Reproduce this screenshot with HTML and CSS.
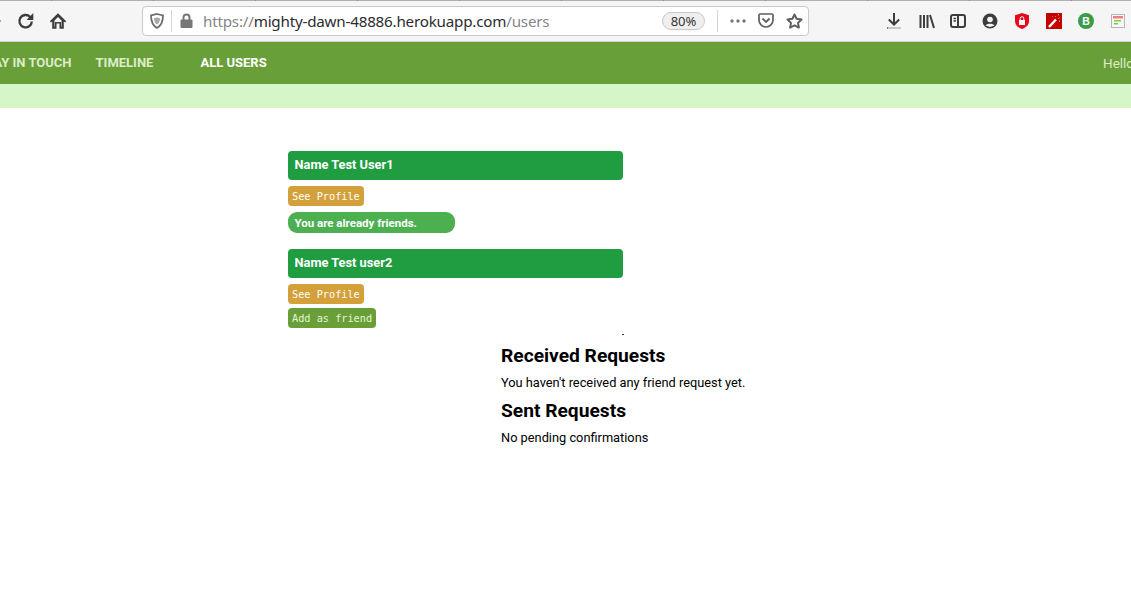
FILE: index.html
```html
<!DOCTYPE html>
<html lang="en">
<head>
<meta charset="utf-8">
<title>Users</title>
<link rel="stylesheet" href="styles.css">
</head>
<body>
<div class="toolbar">
  <div class="tabline"></div>
  <div class="toolrow">
    <span class="backtip"></span>
    <svg class="ico reload" width="18" height="18" viewBox="0 0 18 18"><path d="M14.800 9.500a6.200 6.200 0 1 1-1.800-4.700L15 6.400" fill="none" stroke="#3d3d3f" stroke-width="2.400"/><path d="M16.300 1V8H9.500Z" fill="#3d3d3f"/></svg>
    <svg class="ico home" width="18" height="18" viewBox="0 0 18 18"><path d="M0.800 9.200 9 1.200 17.200 9.200 16 10.500 14.800 9.400V16.800H10.500V11.500H7.500V16.800H3.200V9.400L2 10.500Z" fill="#3d3d3f"/><path d="M5.500 8.500 9 5 12.500 8.500V14.500H12V10H6V14.500H5.500Z" fill="#f5f5f5"/></svg>
    <div class="urlbar">
      <svg class="shield" width="14" height="16" viewBox="0 0 14 16"><path d="M7 1 13 2.500C13 9 11.500 12.500 7 15 2.500 12.500 1 9 1 2.500Z" fill="none" stroke="#6d6d6f" stroke-width="1.800"/><path d="M7 4.500 10 5.200C9.800 8.500 9 10.300 7 11.600 5 10.300 4.200 8.500 4 5.200Z" fill="#a9a9ab"/></svg>
      <span class="urlsep"></span>
      <svg class="lock" width="13" height="15" viewBox="0 0 13 15"><path d="M3.500 7V4.500a3 3 0 0 1 6 0V7" fill="none" stroke="#77777a" stroke-width="2"/><rect x="0.500" y="6.500" width="12" height="8.500" rx="1" fill="#77777a"/></svg>
      <div class="url"><span class="dim">https://</span>mighty-dawn-48886.herokuapp.com<span class="dim">/users</span></div>
      <span class="zoombadge">80%</span>
      <span class="urlsep sep2"></span>
      <svg class="dots" width="16" height="4" viewBox="0 0 16 4"><circle cx="2" cy="2" r="1.700" fill="#77777a"/><circle cx="8" cy="2" r="1.700" fill="#77777a"/><circle cx="14" cy="2" r="1.700" fill="#77777a"/></svg>
      <svg class="pocket" width="16" height="15" viewBox="0 0 16 15"><path d="M1 2.200C1 1.500 1.500 1 2.200 1H13.800C14.500 1 15 1.500 15 2.200V7A7 7 0 0 1 1 7Z" fill="none" stroke="#5f5f62" stroke-width="1.700"/><path d="M4.500 5.500 8 9 11.500 5.500" fill="none" stroke="#5f5f62" stroke-width="1.800"/></svg>
      <svg class="star" width="17" height="16" viewBox="0 0 17 16"><path d="M8.500 1.500 10.600 5.800 15.500 6.500 12 9.900 12.900 14.600 8.500 12.300 4.100 14.600 5 9.900 1.500 6.500 6.400 5.800Z" fill="none" stroke="#5f5f62" stroke-width="2" stroke-linejoin="round"/></svg>
    </div>
    <div class="tools">
      <svg width="16" height="16" viewBox="0 0 16 16"><path d="M8 0V11M2.800 6.500 8 11.500 13.200 6.500" fill="none" stroke="#3d3d3f" stroke-width="2"/><rect x="1" y="14" width="14" height="2" fill="#c8c8c8"/><rect x="1" y="14" width="1" height="2" fill="#3b82e0"/></svg>
      <svg class="lib" width="16" height="15" viewBox="0 0 16 15"><path d="M1.500 1V14M5 1V14M8.500 1V14M11 1 15 14" fill="none" stroke="#3d3d3f" stroke-width="2"/></svg>
      <svg width="16" height="14" viewBox="0 0 16 14"><rect x="1" y="1" width="14" height="12" rx="2" fill="none" stroke="#3d3d3f" stroke-width="2"/><path d="M8 1V13" stroke="#3d3d3f" stroke-width="2"/><path d="M3.500 4.500H6M3.500 7H6" fill="none" stroke="#3d3d3f" stroke-width="1.300"/></svg>
      <svg width="16" height="16" viewBox="0 0 16 16"><circle cx="8" cy="8" r="7.500" fill="#3d3d3f"/><circle cx="8" cy="6.500" r="2.800" fill="#f5f5f5"/><path d="M3.500 12.500C5 10 11 10 12.500 12.500L8 14Z" fill="#f5f5f5"/></svg>
      <svg width="16" height="16" viewBox="0 0 16 16"><path d="M8 0 15 2.200V8C15 12 12 14.500 8 16 4 14.500 1 12 1 8V2.200Z" fill="#e8081c"/><rect x="5" y="7" width="6" height="5" fill="#fff"/><path d="M6.200 7V5.500a1.800 1.800 0 0 1 3.600 0V7" fill="none" stroke="#fff"/></svg>
      <svg width="16" height="16" viewBox="0 0 16 16"><rect width="16" height="16" fill="#c40000"/><path d="M3 14 10 6.500" stroke="#fff" stroke-width="2.500"/><path d="M9.500 3.500 10 3M12.500 5.500 13.500 5M6.500 3.500 7 3M13 8 14 8.500M12 2 13 1.500" stroke="#ffd0d0"/></svg>
      <span class="bdg">B</span>
      <svg class="memo" width="14" height="14" viewBox="0 0 14 14"><rect x="0.500" y="0.500" width="13" height="13" fill="#f7f7f7" stroke="#b5b5b5"/><rect x="2" y="2" width="10" height="2.500" fill="#f47c7c"/><rect x="3" y="6" width="7" height="1.500" fill="#7ccf3a"/><rect x="3" y="9" width="4" height="1.500" fill="#7ccf3a"/></svg>
    </div>
  </div>
</div>

<nav class="nav">
  <a class="navlink stay">STAY IN TOUCH</a>
  <a class="navlink timeline">TIMELINE</a>
  <a class="navlink active">ALL USERS</a>
  <span class="hello">Hello</span>
</nav>
<div class="band"></div>

<main class="content">
  <section class="users">
    <h3 class="name">Name Test User1</h3>
    <a class="btn gold">See Profile</a>
    <p class="friends">You are already friends.</p>
    <h3 class="name second">Name Test user2</h3>
    <a class="btn gold">See Profile</a>
    <a class="btn olive">Add as friend</a>
    <div class="dot"></div>
  </section>
  <section class="requests">
    <h2 class="reqtitle">Received Requests</h2>
    <p class="reqtext">You haven't received any friend request yet.</p>
    <h2 class="reqtitle">Sent Requests</h2>
    <p class="reqtext">No pending confirmations</p>
  </section>
</main>
</body>
</html>
```
FILE: styles.css
```css
* { box-sizing: border-box; }
html, body { margin: 0; padding: 0; height: 100%; overflow: hidden; background: #fff; }
body { font-family: Roboto, "Liberation Sans", sans-serif; color: #000; }

.toolbar { height: 42px; background: #f5f5f5; border-bottom: 1px solid #cfcfcf; }
.tabline { height: 1px; background: repeating-linear-gradient(90deg, #b0b0b0 0, #b0b0b0 101px, #8e8e8e 101px, #8e8e8e 102px) -50px 0; }
.toolrow { height: 40px; display: flex; align-items: center; position: relative; }
.backtip { position: absolute; left: 0; top: 19px; width: 1px; height: 2px; background: #a8a8a8; }
.ico { flex: none; }
.reload { margin-left: 17px; margin-top: -1px; }
.home { margin-left: 14px; margin-top: -1px; }
.urlbar {
  width: 667px; height: 30px; margin-left: 75px; margin-top: -1px;
  background: #fff; border: 1px solid #c9c9cb; border-radius: 4px;
  display: flex; align-items: center; flex: none;
}
.shield { margin-left: 7px; flex: none; }
.urlsep { width: 1px; height: 22px; background: #d4d4d4; margin-left: 7px; flex: none; }
.lock { margin-left: 8px; flex: none; }
.url { font: 15.200px/28px "Noto Sans", "Open Sans", sans-serif; letter-spacing: -0.210px; color: #2c2c30; margin-left: 10px; width: 459px; white-space: nowrap; flex: none; }
.dim { color: #85858a; }
.zoombadge {
  width: 43px; height: 18px; border: 1px solid #c8c8c8; border-radius: 9px; background: #efefef;
  font: 13px/16px "Noto Sans", sans-serif; color: #333; text-align: center; flex: none;
}
.sep2 { margin-left: 12px; }
.dots { margin-left: 12px; flex: none; }
.pocket { margin-left: 12px; flex: none; }
.star { margin-left: 12px; flex: none; }
.tools { display: flex; align-items: center; margin-left: 77px; gap: 16px; flex: none; }
.lib { margin-left: 1px; margin-right: -1px; }
.memo { margin-left: 1px; }
.bdg {
  width: 16px; height: 16px; border-radius: 50%; background: #3b9b4a; color: #fff;
  font: bold 10.500px/16px "Liberation Sans", sans-serif; text-align: center; flex: none;
}

.nav { height: 42px; background: #689f38; display: flex; align-items: center; overflow: hidden; position: relative; white-space: nowrap; }
.navlink { font-weight: 700; font-size: 13px; line-height: 42px; color: #dcedc8; flex: none; }
.stay { margin-left: -22px; }
.timeline { margin-left: 24px; }
.active { margin-left: 47px; color: #fff; }
.hello { margin-left: auto; font-size: 13.500px; color: #dcedc8; margin-right: -2px; width: 30px; flex: none; }

.band { height: 24px; background: #d5f6c7; }

.content { padding-left: 288px; padding-top: 43px; }
.users { width: 335px; }
.name {
  margin: 0; height: 29px; padding-left: 6.500px; background: #1f9d40; border-radius: 4px;
  color: #fff; font-size: 12.800px; font-weight: 700; line-height: 28px;
}
.second { margin-top: 16px; }
.btn {
  display: block; width: fit-content; height: 20px; margin-top: 6px; padding: 0 4px; border-radius: 4px;
  font: 10.240px/21px "DejaVu Sans Mono", monospace; color: #fff;
}
.gold { background: #d4a03a; }
.olive { background: #689f38; margin-top: 4px; color: #e6f5d5; }
.friends {
  margin: 6px 0 0; width: 167px; height: 21px; padding-left: 6.500px; border-radius: 9px;
  background: #4caf50; color: #fff; font-size: 11.500px; font-weight: 700; line-height: 22px;
}
.dot { width: 2px; height: 1px; background: #333; margin: 6px -1px 0 auto; }

.requests { margin-left: 213px; margin-top: 10px; }
.reqtitle { margin: 0; font-size: 19.200px; font-weight: 700; line-height: 22px; }
.reqtext { margin: 8px 0 10px; font-size: 12.800px; line-height: 15px; }
```
